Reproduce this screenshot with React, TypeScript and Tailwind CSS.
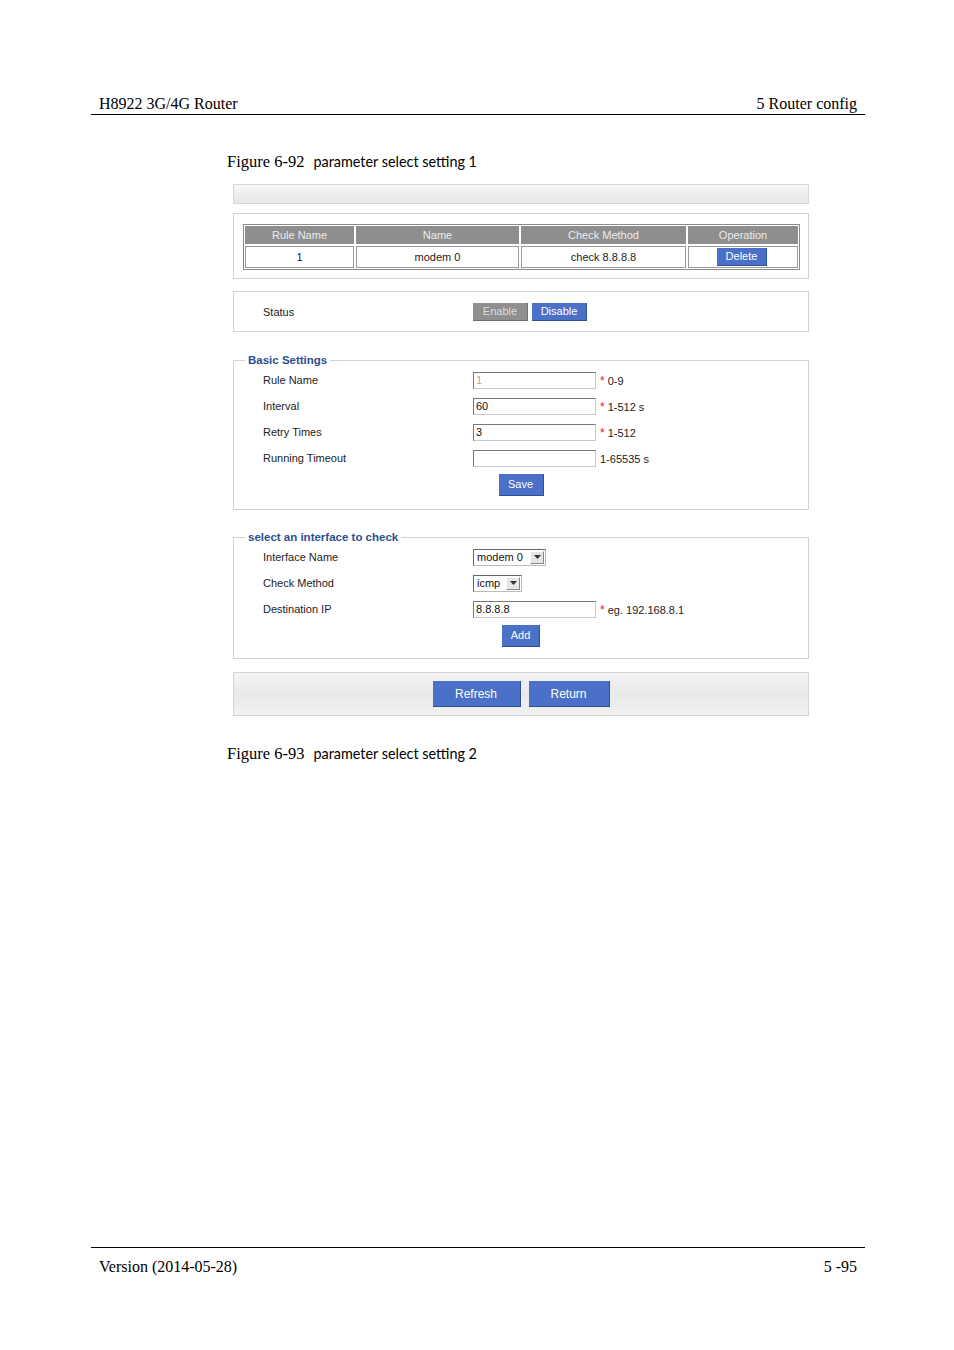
import React from "react";

const serif = "font-['Liberation_Serif',serif]";
const ui = "font-['Liberation_Sans',Arial,sans-serif] text-[11px] text-[#222]";

const BlueButton = ({ label, className }: { label: string; className: string }) => (
  <button
    className={`flex items-center justify-center bg-[#4a70c8] text-white border-b border-r border-[#2f4f9a] ${className}`}
  >
    {label}
  </button>
);

const TextBox = ({ value, disabled }: { value: string; disabled?: boolean }) => (
  <div
    className={`w-[123px] h-[17px] flex items-center pl-[2px] bg-white border border-t-[#777] border-l-[#777] border-r-[#c8c8c8] border-b-[#c8c8c8] ${
      disabled ? "text-[#aaa]" : "text-[#111]"
    }`}
  >
    {value}
  </div>
);

const SelectBox = ({ value, width }: { value: string; width: string }) => (
  <div
    className={`${width} h-[17px] flex items-center justify-between pl-[3px] pr-[1px] bg-white border border-t-[#666] border-l-[#666] border-r-[#bbb] border-b-[#bbb]`}
  >
    <span className="text-[#111]">{value}</span>
    <span className="w-[14px] h-[13px] flex items-center justify-center bg-[#e4e4e4] border border-t-[#fff] border-l-[#fff] border-r-[#888] border-b-[#888]">
      <svg width="7" height="4" viewBox="0 0 7 4">
        <path d="M0 0h7L3.5 4z" fill="#333" />
      </svg>
    </span>
  </div>
);

const Hint = ({ text, required }: { text: string; required?: boolean }) => (
  <span className="flex items-center gap-[3px] pl-[4px] pt-[2px]">
    {required && <span className="text-[#e0202a] text-[12px] leading-none">*</span>}
    <span>{text}</span>
  </span>
);

const Row = ({ label, children }: { label: string; children: React.ReactNode }) => (
  <div className="flex items-center h-[26px] pl-[29px]">
    <div className="w-[210px]">{label}</div>
    <div className="flex items-center">{children}</div>
  </div>
);

const Caption = ({ num, text, top }: { num: string; text: string; top: string }) => (
  <div className={`pl-[227px] ${top} flex items-baseline h-[18px] leading-[18px]`}>
    <span className={`${serif} text-[16.5px] text-black`}>Figure {num}</span>
    <span className="font-['Lato',sans-serif] text-[14.4px] text-black ml-[9px]">{text}</span>
  </div>
);

export default function App() {
  const columns = [
    { title: "Rule Name", w: "w-[109px]" },
    { title: "Name", w: "w-[163px]" },
    { title: "Check Method", w: "w-[165px]" },
    { title: "Operation", w: "w-[110px]" },
  ];

  return (
    <div className="w-[954px] h-[1350px] bg-white flex flex-col">
      <div
        className={`ml-[91px] w-[774px] pt-[95px] pb-[2px] px-[8px] border-b border-black flex justify-between ${serif} text-[16px] leading-[17px] text-black`}
      >
        <span>H8922 3G/4G Router</span>
        <span>5 Router config</span>
      </div>

      <Caption num="6-92" text="parameter select setting 1" top="mt-[38px]" />

      <div className={`ml-[233px] w-[576px] mt-[13px] ${ui}`}>
        <div className="h-[20px] border border-[#d8d8d8] bg-gradient-to-b from-[#f7f7f7] to-[#e6e6e6]" />

        <div className="mt-[9px] border border-[#d2d2d2] pt-[10px] pb-[8px] pl-[9px]">
          <div className="w-[557px] border border-[#8a8a8a] p-[1px] flex flex-col gap-[2px]">
            <div className="flex gap-[2px]">
              {columns.map((c) => (
                <div
                  key={c.title}
                  className={`${c.w} h-[18px] bg-[#8e8e8e] text-[#ececec] flex items-center justify-center`}
                >
                  {c.title}
                </div>
              ))}
            </div>
            <div className="flex gap-[2px]">
              <div className="w-[109px] h-[22px] border border-[#9a9a9a] flex items-center justify-center">1</div>
              <div className="w-[163px] h-[22px] border border-[#9a9a9a] flex items-center justify-center">modem 0</div>
              <div className="w-[165px] h-[22px] border border-[#9a9a9a] flex items-center justify-center">check 8.8.8.8</div>
              <div className="w-[110px] h-[22px] border border-[#9a9a9a] flex items-center pl-[28px]">
                <BlueButton label="Delete" className="w-[50px] h-[18px]" />
              </div>
            </div>
          </div>
        </div>

        <div className="mt-[12px] h-[41px] border border-[#d2d2d2] flex items-center pl-[29px]">
          <div className="w-[210px] pt-[2px]">Status</div>
          <div className="flex gap-[4px]">
            <button className="w-[55px] h-[18px] bg-[#8f8f8f] text-[#dcdcdc] border-b border-r border-[#6f6f6f]">
              Enable
            </button>
            <BlueButton label="Disable" className="w-[55px] h-[18px]" />
          </div>
        </div>

        <fieldset className="mt-[22px] border border-[#d2d2d2]">
          <legend className="ml-[11px] px-[3px] font-bold text-[11.5px] text-[#2b4f8f] leading-[13px]">
            Basic Settings
          </legend>
          <div className="flex flex-col pb-[13px]">
            <Row label="Rule Name">
              <TextBox value="1" disabled />
              <Hint text="0-9" required />
            </Row>
            <Row label="Interval">
              <TextBox value="60" />
              <Hint text="1-512 s" required />
            </Row>
            <Row label="Retry Times">
              <TextBox value="3" />
              <Hint text="1-512" required />
            </Row>
            <Row label="Running Timeout">
              <TextBox value="" />
              <Hint text="1-65535 s" />
            </Row>
            <div className="flex justify-center mt-[3px]">
              <BlueButton label="Save" className="w-[45px] h-[22px]" />
            </div>
          </div>
        </fieldset>

        <fieldset className="mt-[21px] border border-[#d2d2d2]">
          <legend className="ml-[11px] px-[3px] font-bold text-[11.5px] text-[#2b4f8f] leading-[13px]">
            select an interface to check
          </legend>
          <div className="flex flex-col pb-[11px]">
            <Row label="Interface Name">
              <SelectBox value="modem 0" width="w-[73px]" />
            </Row>
            <Row label="Check Method">
              <SelectBox value="icmp" width="w-[49px]" />
            </Row>
            <Row label="Destination IP">
              <TextBox value="8.8.8.8" />
              <Hint text="eg. 192.168.8.1" required />
            </Row>
            <div className="flex justify-center mt-[3px]">
              <BlueButton label="Add" className="w-[38px] h-[22px]" />
            </div>
          </div>
        </fieldset>

        <div className="mt-[13px] h-[44px] border border-[#d4d4d4] bg-gradient-to-b from-[#f4f4f4] via-[#e9e9e9] to-[#f1f1f1] flex items-center justify-center gap-[8px]">
          <BlueButton label="Refresh" className="w-[88px] h-[26px] text-[12px]" />
          <BlueButton label="Return" className="w-[81px] h-[26px] text-[12px]" />
        </div>
      </div>

      <Caption num="6-93" text="parameter select setting 2" top="mt-[29px]" />

      <div
        className={`mt-auto ml-[91px] w-[774px] border-t border-black pt-[10px] pb-[74px] px-[8px] flex justify-between ${serif} text-[16px] leading-[18px] text-black`}
      >
        <span>Version (2014-05-28)</span>
        <span>5 -95</span>
      </div>
    </div>
  );
}
